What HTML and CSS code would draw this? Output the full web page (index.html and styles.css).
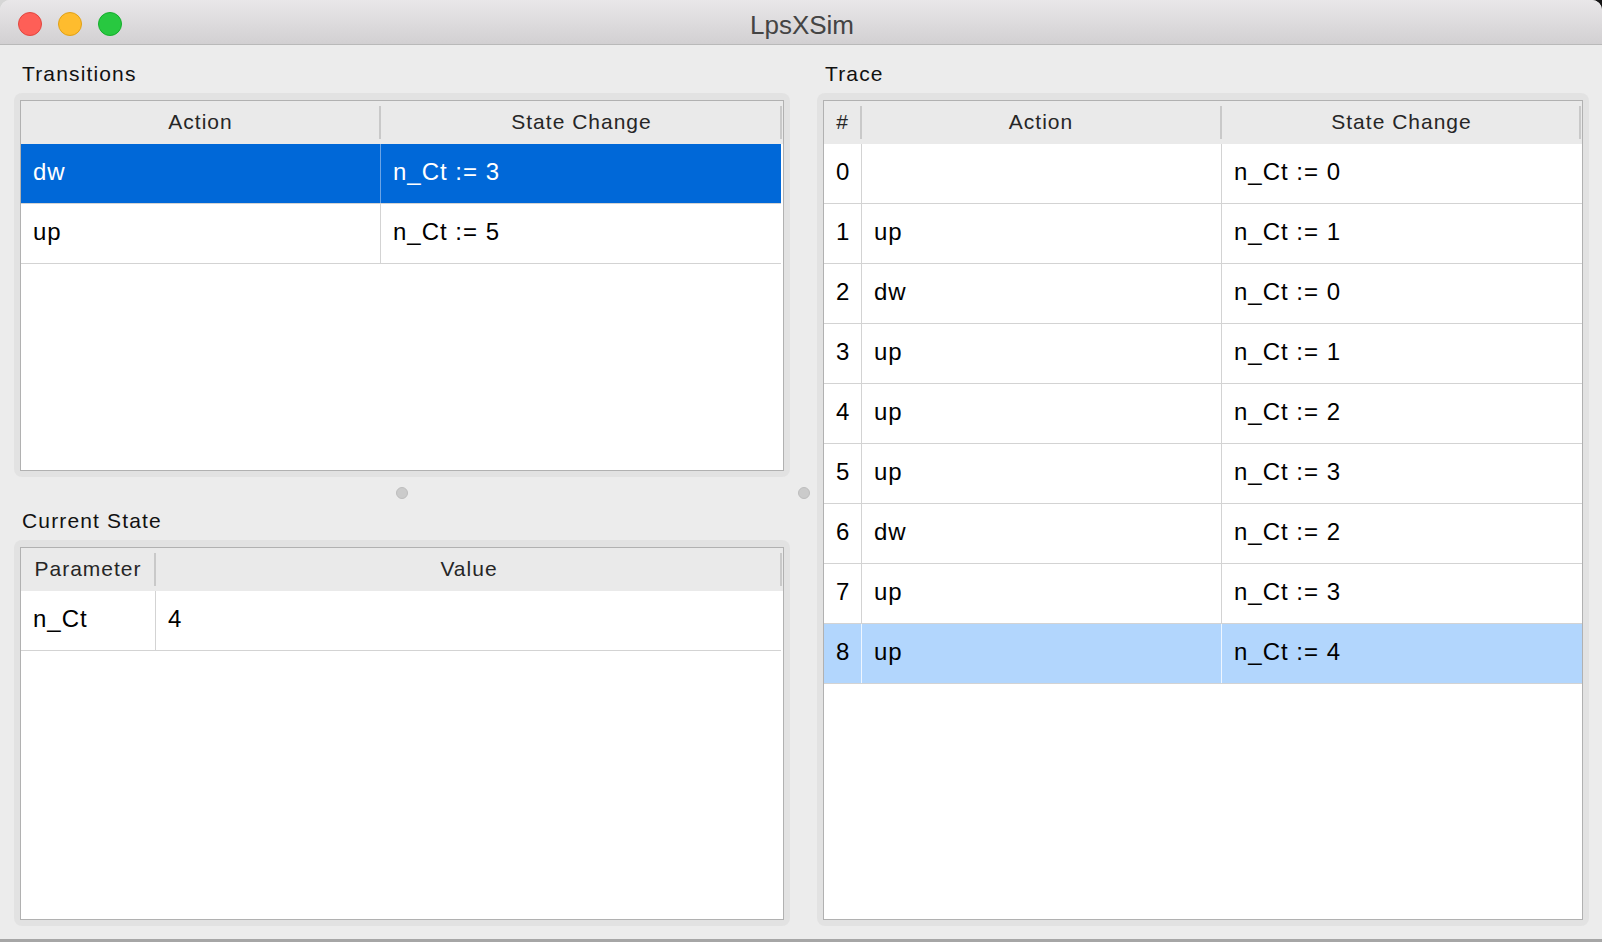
FILE: index.html
```html
<!DOCTYPE html>
<html>
<head>
<meta charset="utf-8">
<title>LpsXSim</title>
<link rel="stylesheet" href="styles.css">
</head>
<body>
<div class="window">
  <div class="titlebar">
    <div class="lights">
      <span class="light red"></span>
      <span class="light yellow"></span>
      <span class="light green"></span>
    </div>
    <div class="title">LpsXSim</div>
  </div>
  <div class="content">
    <div class="col col-left">
      <div class="pane pane-top">
        <div class="label">Transitions</div>
        <div class="box">
          <div class="table t-transitions">
            <div class="thead">
              <div class="th">Action</div>
              <div class="th">State Change</div>
            </div>
            <div class="tr selected">
              <div class="td">dw</div>
              <div class="td">n_Ct := 3</div>
            </div>
            <div class="tr">
              <div class="td">up</div>
              <div class="td">n_Ct := 5</div>
            </div>
          </div>
        </div>
      </div>
      <div class="hsplit"><span class="dot"></span></div>
      <div class="pane pane-bottom">
        <div class="label label-tight">Current State</div>
        <div class="box">
          <div class="table t-state">
            <div class="thead">
              <div class="th">Parameter</div>
              <div class="th">Value</div>
            </div>
            <div class="tr">
              <div class="td">n_Ct</div>
              <div class="td">4</div>
            </div>
          </div>
        </div>
      </div>
    </div>
    <div class="vsplit"><span class="dot"></span></div>
    <div class="col col-right">
      <div class="pane pane-full">
        <div class="label">Trace</div>
        <div class="box">
          <div class="table t-trace">
            <div class="thead">
              <div class="th">#</div>
              <div class="th">Action</div>
              <div class="th">State Change</div>
            </div>
            <div class="tr"><div class="td">0</div><div class="td"></div><div class="td">n_Ct := 0</div></div>
            <div class="tr"><div class="td">1</div><div class="td">up</div><div class="td">n_Ct := 1</div></div>
            <div class="tr"><div class="td">2</div><div class="td">dw</div><div class="td">n_Ct := 0</div></div>
            <div class="tr"><div class="td">3</div><div class="td">up</div><div class="td">n_Ct := 1</div></div>
            <div class="tr"><div class="td">4</div><div class="td">up</div><div class="td">n_Ct := 2</div></div>
            <div class="tr"><div class="td">5</div><div class="td">up</div><div class="td">n_Ct := 3</div></div>
            <div class="tr"><div class="td">6</div><div class="td">dw</div><div class="td">n_Ct := 2</div></div>
            <div class="tr"><div class="td">7</div><div class="td">up</div><div class="td">n_Ct := 3</div></div>
            <div class="tr current"><div class="td">8</div><div class="td">up</div><div class="td">n_Ct := 4</div></div>
          </div>
        </div>
      </div>
    </div>
  </div>
  <div class="bottomline"></div>
</div>
</body>
</html>
```

FILE: styles.css
```css
html, body {
  margin: 0;
  padding: 0;
}
body {
  width: 1602px;
  height: 942px;
  overflow: hidden;
  background: linear-gradient(to right, #d6d6d6 0, #d6d6d6 43%, #161616 43%, #161616 100%);
  font-family: "Liberation Sans", Arial, sans-serif;
}
.window {
  width: 1602px;
  height: 942px;
  background: #ececec;
  border-radius: 10px 10px 0 0;
  overflow: hidden;
  display: flex;
  flex-direction: column;
}
.titlebar {
  height: 44px;
  flex: none;
  border-bottom: 1px solid #b9b9b9;
  background: linear-gradient(to bottom, #e9e7e9, #d2d0d2);
  position: relative;
  display: flex;
  align-items: center;
  justify-content: center;
}
.lights {
  position: absolute;
  left: 18px;
  top: 12px;
  display: flex;
  gap: 16px;
}
.light {
  width: 22px;
  height: 22px;
  border-radius: 50%;
  border: 1px solid transparent;
}
.red { background: #fe5f57; border-color: #e2463f; }
.yellow { background: #febc2e; border-color: #e1a116; }
.green { background: #28c840; border-color: #14ae2b; }
.title {
  font-size: 26px;
  color: #444;
  padding-left: 2px;
  margin-top: 6px;
}
.content {
  flex: 1;
  display: flex;
  padding: 0 13px 13px 14px;
  min-height: 0;
}
.col {
  display: flex;
  flex-direction: column;
}
.col-left { width: 776px; }
.col-right { width: 772px; }
.pane {
  display: flex;
  flex-direction: column;
}
.pane-top { height: 432px; }
.pane-bottom { flex: 1; }
.pane-full { flex: 1; }
.label {
  font-size: 21px;
  letter-spacing: 1.15px;
  line-height: 24px;
  color: #111;
  padding: 17px 0 7px 8px;
  flex: none;
}
.label-tight { padding-top: 0; }
.box {
  flex: 1;
  display: flex;
  background: #e2e2e2;
  border-radius: 8px;
  padding: 7px 6px 6px 6px;
}
.table {
  flex: 1;
  background: #fff;
  border: 1px solid #b1b1b1;
  display: flex;
  flex-direction: column;
}
.thead, .tr {
  display: grid;
}
.t-transitions .thead, .t-transitions .tr { grid-template-columns: 359px 1fr; }
.t-state .thead, .t-state .tr { grid-template-columns: 134px 1fr; }
.t-trace .thead, .t-trace .tr { grid-template-columns: 37px 360px 1fr; }
.t-transitions .tr, .t-state .tr { margin-right: 2px; }
.thead {
  height: 43px;
  background: #eaeaea;
}
.th {
  position: relative;
  display: flex;
  align-items: center;
  justify-content: center;
  font-size: 21px;
  letter-spacing: 1px;
  color: #262626;
  padding-bottom: 2px;
}
.th::after {
  content: "";
  position: absolute;
  right: -1px;
  top: 5px;
  bottom: 5px;
  width: 2px;
  background: #c9c9c9;
}
.th:last-child::after { right: 1px; }
.tr {
  height: 59px;
  border-bottom: 1px solid #d3d3d3;
}
.td {
  display: flex;
  align-items: center;
  padding-left: 12px;
  padding-bottom: 3px;
  font-size: 24px;
  letter-spacing: 1px;
  color: #000;
}
.td + .td { border-left: 1px solid #d3d3d3; }
.tr.selected { background: #0068d8; }
.tr.selected .td { color: #fff; }
.tr.selected .td + .td { border-left-color: #6ba4e6; }
.tr.current { background: #b2d6fd; }
.tr.current .td + .td { border-left-color: #eef6ff; }
.hsplit {
  height: 32px;
  flex: none;
  display: flex;
  align-items: center;
  justify-content: center;
}
.vsplit {
  width: 27px;
  flex: none;
  display: flex;
  justify-content: center;
  padding-top: 442px;
  align-items: flex-start;
}
.dot {
  width: 10px;
  height: 10px;
  border-radius: 50%;
  background: #cbcbcb;
  border: 1px solid #bdbdbd;
}
.bottomline {
  height: 3px;
  flex: none;
  background: #a6a6a6;
}
```
